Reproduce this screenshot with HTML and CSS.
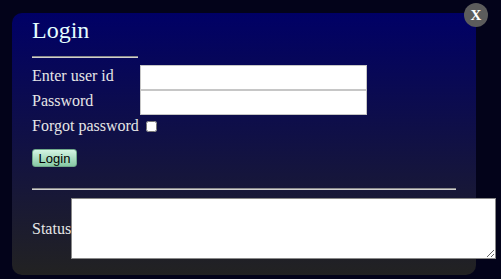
FILE: index.html
```html
<!DOCTYPE html>
<html lang="en">
<head>
    <meta charset="UTF-8">
    <title>Login</title>
    <link rel="stylesheet" href="styles.css">
</head>
<body>
<div class="popup">
    <span class="close">X</span>
    <h1>Login</h1>
    <hr class="short">
    <div class="fields">
        <label for="uid">Enter user id</label>
        <input type="text" id="uid">
        <label for="pwd">Password</label>
        <input type="password" id="pwd">
        <label for="forgot">Forgot password</label>
        <span><input type="checkbox" id="forgot"></span>
    </div>
    <button class="btn">Login</button>
    <hr>
    <div class="status">
        <label for="status">Status</label>
        <textarea id="status"></textarea>
    </div>
</div>
</body>
</html>
```

FILE: styles.css
```css
body{
    margin: 0;
    background: #03031a;
    font-family: "Liberation Serif", "Times New Roman", serif;
    overflow: hidden;
}
/*弹出框*/
.popup{
    position: relative;
    width: 424px;
    height: 259px;
    margin: 13px 0 0 12px;
    padding: 3px 20px 0 20px;
    border-radius: 10px;
    background: linear-gradient(#000066, #222222);
}
.close{
    position: absolute;
    top: -10px;
    right: -12px;
    width: 24px;
    height: 24px;
    border-radius: 50%;
    background: #5c5c5c;
    color: #fff;
    font-weight: bold;
    font-size: 15px;
    line-height: 24px;
    text-align: center;
}
h1{
    margin: 0;
    font-size: 24px;
    font-weight: normal;
    line-height: 28px;
    color: #e4ffff;
}
hr{
    margin: 0;
    border: 0;
    border-top: 1px solid #8a8a8a;
    border-bottom: 1px solid #cfcfcf;
}
hr.short{
    width: 25%;
    margin-top: 12px;
}
/*表单行*/
.fields{
    display: grid;
    grid-template-columns: 108px 227px;
    grid-template-rows: 25px 25px 24px;
    margin-top: 7px;
    color: #e6e6e6;
    font-size: 16px;
}
.fields label{
    line-height: 22px;
    white-space: nowrap;
}
.fields input[type=text],
.fields input[type=password]{
    box-sizing: border-box;
    width: 227px;
    height: 25px;
    margin: 0;
    border: 1px solid #c6c6c6;
    background: #fff;
}
.fields input[type=checkbox]{
    width: 11px;
    height: 11px;
    margin: 6px 0 0 6px;
}
.btn{
    display: block;
    margin-top: 10px;
    width: 45px;
    height: 18px;
    padding: 0;
    border: 1px solid #6fa88a;
    border-radius: 3px;
    background: linear-gradient(#d4f4e2, #86c8a4);
    font-family: "Liberation Sans", Arial, sans-serif;
    font-size: 13px;
    color: #000;
}
.btn + hr{
    margin-top: 21px;
}
.status{
    display: flex;
    align-items: center;
    margin-top: 8px;
    color: #e6e6e6;
    font-size: 16px;
}
.status textarea{
    box-sizing: border-box;
    width: 425px;
    height: 61px;
    margin: 0;
    border: 1px solid #888;
    flex-shrink: 0;
}
```
